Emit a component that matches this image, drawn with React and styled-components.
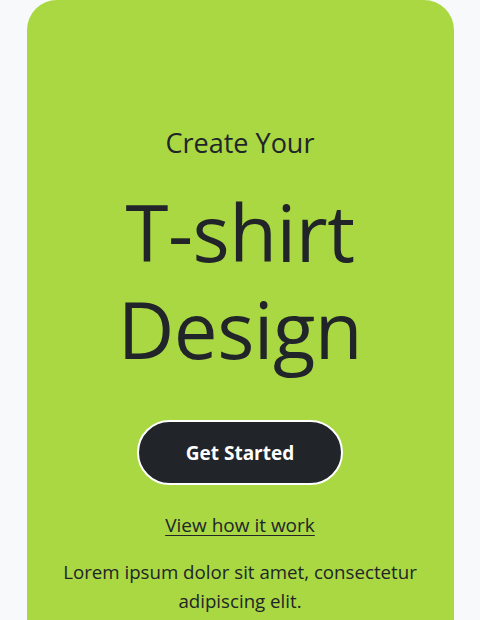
import styled, { createGlobalStyle } from 'styled-components';

const GlobalStyle = createGlobalStyle`
    html, body {
        margin: 0;
        padding: 0;
        background-color: #f8f9fa;
        font-family: "Open Sans", "Noto Sans", sans-serif;
        color: #212529;
    }
`;

const App = () => {
    return (
        <>
            <GlobalStyle />
            <PageStyled>
                <CardStyled>
                    <KickerStyled>Create Your</KickerStyled>
                    <TitleStyled>
                        T-shirt
                        <br />
                        Design
                    </TitleStyled>
                    <ButtonStyled>Get Started</ButtonStyled>
                    <LinkStyled href="#">View how it work</LinkStyled>
                    <TextStyled>
                        Lorem ipsum dolor sit amet, consectetur adipiscing elit.
                    </TextStyled>
                </CardStyled>
            </PageStyled>
        </>
    );
};

export default App;

const PageStyled = styled.main`
    height: 620px;
    overflow: hidden;
`;

const CardStyled = styled.section`
    width: 427px;
    margin: 0 auto;
    min-height: 700px;
    box-sizing: border-box;
    padding: 127px 24px 0;
    background-color: #a9d842;
    border-radius: 30px 30px 0 0;
    display: flex;
    flex-direction: column;
    align-items: center;
    text-align: center;
`;

const KickerStyled = styled.p`
    margin: 0;
    font-size: 27px;
    line-height: 1.2;
    font-weight: 400;
`;

const TitleStyled = styled.h1`
    margin: 25px 0 0;
    font-size: 78px;
    line-height: 97px;
    font-weight: 400;
    letter-spacing: -0.5px;
`;

const ButtonStyled = styled.button`
    margin-top: 42px;
    width: 206px;
    height: 65px;
    border: 2px solid #ffffff;
    border-radius: 33px;
    background-color: #212529;
    color: #ffffff;
    font-family: inherit;
    font-size: 19px;
    font-weight: 700;
    cursor: pointer;
`;

const LinkStyled = styled.a`
    margin-top: 27px;
    font-size: 19px;
    color: #212529;
    text-decoration: underline;
    text-underline-offset: 3px;
`;

const TextStyled = styled.p`
    margin: 19px 0 0;
    font-size: 18.7px;
    line-height: 29px;
    max-width: 380px;
`;
